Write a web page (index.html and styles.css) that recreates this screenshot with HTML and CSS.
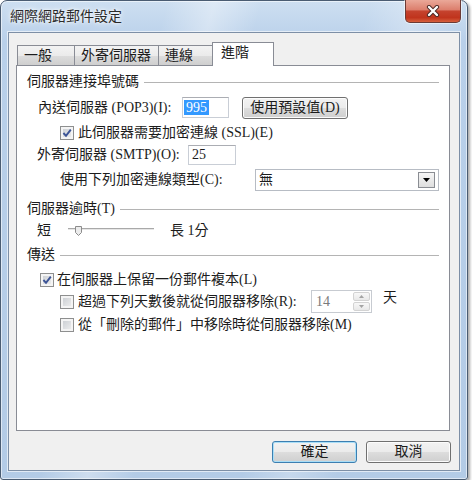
FILE: index.html
```html
<!DOCTYPE html>
<html lang="zh-Hant">
<head>
    <meta charset="UTF-8">
    <title>網際網路郵件設定</title>
    <link rel="stylesheet" href="styles.css">
</head>
<body>
    <div class="window">
        <div class="titlebar">
            <span class="title">網際網路郵件設定</span>
            <button class="close">
                <svg width="14" height="12" viewBox="0 0 14 12">
                    <path d="M3 2 L11 10 M11 2 L3 10" stroke="#4a2622" stroke-width="4.2" stroke-linecap="round" fill="none"/>
                    <path d="M3 2 L11 10 M11 2 L3 10" stroke="#ffffff" stroke-width="2.4" stroke-linecap="round" fill="none"/>
                </svg>
            </button>
        </div>
        <div class="client">
            <div class="tabs">
                <div class="tab tab-general">一般</div>
                <div class="tab tab-outgoing">外寄伺服器</div>
                <div class="tab tab-link">連線</div>
                <div class="tab active">進階</div>
            </div>
            <div class="panel">
                <div class="group-title">伺服器連接埠號碼</div>

                <div class="row row-pop3">
                    <span class="label pop3-label">內送伺服器 (POP3)(I):</span>
                    <div class="textbox pop3-box"><span class="sel">995</span></div>
                    <button class="btn default-port">使用預設值(D)</button>
                </div>

                <div class="row row-ssl">
                    <span class="check">
                        <svg width="12" height="12" viewBox="0 0 12 12"><path d="M2.4 6 L5 8.8 L9.8 2.6" stroke="#3b5396" stroke-width="1.9" fill="none"/></svg>
                    </span>
                    <span class="label">此伺服器需要加密連線 (SSL)(E)</span>
                </div>

                <div class="row row-smtp">
                    <span class="label smtp-label">外寄伺服器 (SMTP)(O):</span>
                    <div class="textbox smtp-box">25</div>
                </div>

                <div class="row row-enc">
                    <span class="label enc-label">使用下列加密連線類型(C):</span>
                    <div class="select">
                        <span>無</span>
                        <span class="drop">
                            <svg width="7" height="4" viewBox="0 0 7 4"><polygon points="0,0 7,0 3.5,4" fill="#000"/></svg>
                        </span>
                    </div>
                </div>

                <div class="group-title gt-timeout">伺服器逾時(T)</div>

                <div class="row row-slider">
                    <span>短</span>
                    <svg class="slider" width="86" height="14" viewBox="0 0 86 14">
                        <rect x="0" y="4" width="86" height="1" fill="#a9a9a9"/>
                        <rect x="0" y="5" width="86" height="1" fill="#e6e6e6"/>
                        <polygon points="7.5,2.5 13.5,2.5 13.5,8.5 10.5,11.5 7.5,8.5" fill="#ececec" stroke="#8c8c8c"/>
                    </svg>
                    <span class="long">長 1分</span>
                </div>

                <div class="group-title gt-delivery">傳送</div>

                <div class="row row-keep">
                    <span class="check">
                        <svg width="12" height="12" viewBox="0 0 12 12"><path d="M2.4 6 L5 8.8 L9.8 2.6" stroke="#3b5396" stroke-width="1.9" fill="none"/></svg>
                    </span>
                    <span class="label">在伺服器上保留一份郵件複本(L)</span>
                </div>

                <div class="row row-days">
                    <span class="check"></span>
                    <span class="label days-label">超過下列天數後就從伺服器移除(R):</span>
                    <div class="spin">
                        <span>14</span>
                        <span class="spin-btns">
                            <span class="spin-btn"><svg width="5" height="3" viewBox="0 0 5 3"><polygon points="0,3 5,3 2.5,0" fill="#a3a3a3"/></svg></span>
                            <span class="spin-btn"><svg width="5" height="3" viewBox="0 0 5 3"><polygon points="0,0 5,0 2.5,3" fill="#a3a3a3"/></svg></span>
                        </span>
                    </div>
                    <span class="unit">天</span>
                </div>

                <div class="row row-deleted">
                    <span class="check"></span>
                    <span class="label">從「刪除的郵件」中移除時從伺服器移除(M)</span>
                </div>
            </div>
            <div class="actions">
                <button class="btn ok">確定</button>
                <button class="btn">取消</button>
            </div>
        </div>
    </div>
</body>
</html>
```

FILE: styles.css
```css
body {
    margin: 0;
    background: #fff;
    font-family: "Liberation Serif", "Noto Sans CJK TC", serif;
    font-size: 14px;
    color: #1c1c1c;
}
.window {
    width: 468px;
    height: 480px;
    box-sizing: border-box;
    display: flex;
    flex-direction: column;
    padding: 0 7px;
    border: 1px solid #4a5c72;
    border-radius: 7px 7px 3px 3px;
    background:
        linear-gradient(105deg, rgba(255,255,255,0) 28%, rgba(255,255,255,.35) 36%, rgba(255,255,255,0) 44%, rgba(255,255,255,0) 62%, rgba(255,255,255,.25) 70%, rgba(255,255,255,0) 78%),
        linear-gradient(#cddff1, #b9d0ea 40px, #b3cbe6);
    box-shadow: inset 0 0 0 1px rgba(255,255,255,.55), 2px 2px 3px rgba(0,0,0,.35);
}
.titlebar {
    height: 31px;
    flex: none;
    display: flex;
    justify-content: space-between;
    align-items: flex-start;
}
.title {
    padding-left: 2px;
    line-height: 31px;
    color: #2a2a2a;
    text-shadow: 0 0 6px #fff, 0 0 3px #fff;
}
.close {
    margin-top: -1px;
    width: 56px;
    height: 23px;
    margin-right: -1px;
    padding: 0;
    display: flex;
    align-items: center;
    justify-content: center;
    border: 1px solid #6b3a35;
    border-top: 0;
    border-radius: 0 0 5px 5px;
    background: linear-gradient(#eaa899 0%, #dc7e6c 45%, #c5432e 50%, #c0341d 80%, #d6603e 100%);
    box-shadow: 0 0 0 1px rgba(255,255,255,.5);
}
.client {
    height: 439px;
    flex: none;
    box-sizing: border-box;
    border: 1px solid #7d8fa6;
    background: #f0f0f0;
    padding: 9px 9px 0 7px;
    display: flex;
    flex-direction: column;
    box-shadow: 0 0 0 1px rgba(255,255,255,.6);
}
.tabs {
    display: flex;
    align-items: flex-end;
    height: 24px;
    flex: none;
    margin-bottom: -1px;
    padding-left: 1px;
    position: relative;
    z-index: 1;
}
.tab {
    box-sizing: border-box;
    height: 20px;
    margin-bottom: 1px;
    margin-left: -1px;
    padding: 1px 0 0 6px;
    line-height: 18px;
    border: 1px solid #898c95;
    border-bottom: 0;
    background: linear-gradient(#f3f3f3, #ebebeb 50%, #dddddd 50%, #cfcfcf);
}
.tab:first-child {
    margin-left: 0;
}
.tab-general {
    width: 58px;
}
.tab-outgoing {
    width: 85px;
}
.tab-link {
    width: 55px;
}
.tab.active {
    width: 62px;
    height: 24px;
    margin-bottom: 0;
    padding: 0 0 0 8px;
    line-height: 20px;
    background: #fff;
}
.panel {
    height: 366px;
    flex: none;
    box-sizing: border-box;
    border: 1px solid #898c95;
    background: #fff;
    padding: 6px 10px 0;
}
.group-title {
    display: flex;
    align-items: center;
    height: 20px;
    gap: 5px;
    line-height: 16px;
    white-space: nowrap;
}
.group-title::after {
    content: "";
    flex: 1;
    height: 1px;
    margin-top: 1px;
    background: #b4b4b4;
}
.gt-timeout {
    margin-top: 8px;
}
.gt-delivery {
    margin-top: 4px;
}
.row {
    display: flex;
    align-items: center;
    line-height: 16px;
    white-space: nowrap;
}
.label {
    flex: none;
}
.row-pop3 {
    height: 21px;
    margin-top: 5px;
    padding-left: 11px;
}
.pop3-label {
    width: 144px;
}
.row-ssl {
    height: 15px;
    margin-top: 7px;
    padding-left: 33px;
}
.row-smtp {
    height: 20px;
    margin-top: 5px;
    padding-left: 10px;
}
.smtp-label {
    width: 151px;
}
.row-enc {
    height: 22px;
    margin-top: 4px;
    padding-left: 33px;
}
.enc-label {
    width: 195px;
}
.row-slider {
    height: 20px;
    margin-top: 2px;
    padding-left: 10px;
}
.slider {
    flex: none;
    margin-left: 17px;
}
.long {
    margin-left: 16px;
}
.row-keep {
    height: 15px;
    margin-top: 7px;
    padding-left: 13px;
}
.row-days {
    height: 23px;
    margin-top: 3px;
    padding-left: 33px;
}
.days-label {
    width: 233px;
}
.row-deleted {
    height: 15px;
    margin-top: 4px;
    padding-left: 33px;
}
.textbox {
    box-sizing: border-box;
    height: 21px;
    background: #fff;
    border: 1px solid #c9ced6;
    border-top-color: #abadb3;
    display: flex;
    align-items: center;
    padding-left: 1px;
    flex: none;
}
.pop3-box {
    width: 47px;
}
.sel {
    background: #3399ff;
    color: #fff;
    padding: 0 2px;
    line-height: 15px;
}
.smtp-box {
    width: 48px;
    height: 20px;
    padding-left: 3px;
}
.check {
    flex: none;
    box-sizing: border-box;
    width: 14px;
    height: 14px;
    margin-right: 4px;
    display: flex;
    border: 1px solid #8e8f8f;
    background: linear-gradient(135deg, #c6cacf, #f2f2f2);
    box-shadow: inset 0 0 0 2px #f4f4f4;
}
.row-keep .check {
    margin-right: 3px;
}
.select {
    width: 184px;
    height: 22px;
    flex: none;
    box-sizing: border-box;
    border: 1px solid #b7bcc4;
    background: #fff;
    display: flex;
    align-items: center;
    justify-content: space-between;
    padding-left: 3px;
}
.drop {
    width: 17px;
    height: 16px;
    margin-right: 3px;
    box-sizing: border-box;
    border: 1px solid #8a8d93;
    background: linear-gradient(#f6f6f6, #dedede);
    display: flex;
    align-items: center;
    justify-content: center;
}
.spin {
    width: 61px;
    height: 23px;
    flex: none;
    box-sizing: border-box;
    border: 1px solid #c7cbd1;
    background: #fff;
    display: flex;
    justify-content: space-between;
    align-items: center;
    padding-left: 4px;
    color: #7a7a7a;
}
.spin-btns {
    display: flex;
    flex-direction: column;
    gap: 1px;
    align-self: stretch;
    padding: 1px;
}
.spin-btn {
    width: 17px;
    flex: 1;
    box-sizing: border-box;
    border: 1px solid #d3d3d3;
    border-radius: 2px;
    background: linear-gradient(#f8f8f8, #e8e8e8);
    display: flex;
    align-items: center;
    justify-content: center;
}
.unit {
    align-self: flex-start;
    margin-left: 11px;
}
.btn {
    box-sizing: border-box;
    height: 22px;
    padding: 0;
    border: 1px solid #707070;
    border-radius: 3px;
    background: linear-gradient(#f2f2f2, #ebebeb 50%, #dddddd 50%, #cfcfcf);
    box-shadow: inset 0 0 0 1px #fcfcfc;
    font: inherit;
    color: inherit;
    line-height: 18px;
    flex: none;
}
.default-port {
    width: 106px;
    margin-left: 13px;
}
.actions {
    display: flex;
    justify-content: flex-end;
    gap: 9px;
    margin-top: 10px;
    margin-right: -1px;
}
.actions .btn {
    width: 85px;
}
.btn.ok {
    border-color: #3c7fb1;
    box-shadow: inset 0 0 0 1px #a9def7;
}
```
